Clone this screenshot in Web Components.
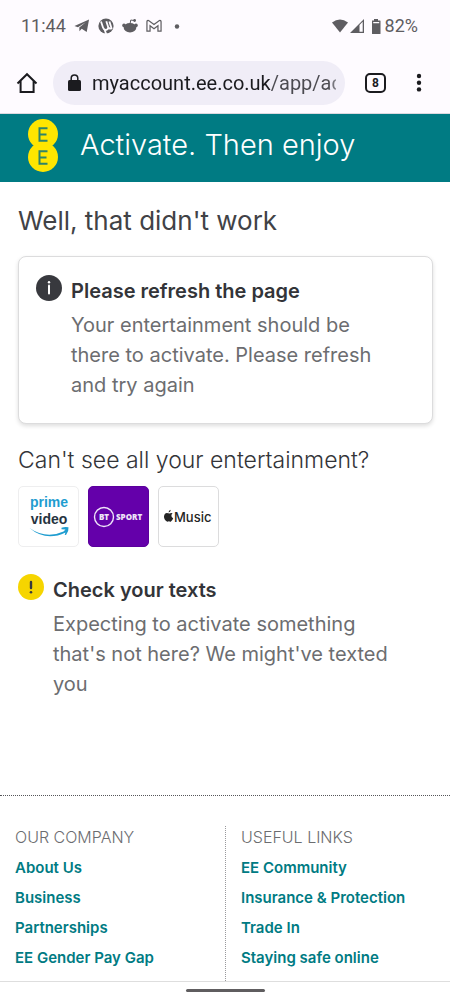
<!DOCTYPE html>
<html lang="en">
<head>
<meta charset="utf-8">
<meta name="viewport" content="width=device-width, initial-scale=1">
<title>Activate. Then enjoy</title>
<style>
  html, body { margin: 0; }
  body {
    background: #fff;
    color: #333438;
    font-family: Inter, "Liberation Sans", sans-serif;
    --teal: #007b83;
    --grey: #6c6d70;
  }
</style>
</head>
<body>
<ee-app></ee-app>

<script>
const define = (name, html) => {
  const template = document.createElement('template');
  template.innerHTML = html;
  customElements.define(name, class extends HTMLElement {
    constructor() {
      super();
      this.attachShadow({ mode: 'open' }).append(template.content.cloneNode(true));
    }
  });
};

define('status-bar', `
<style>
  :host { display: flex; align-items: center; height: 52px; padding: 0 32px 0 21px; box-sizing: border-box;
    background: #fefbff; color: #5e5d61; font: 18px/24px Roboto, sans-serif; }
  svg { display: block; fill: currentColor; }
  .icons { display: flex; align-items: center; gap: 8px; margin-left: 8px; flex: 1; }
  .signals { display: flex; align-items: center; gap: 2px; }
</style>
<span>11:44</span>
<span class="icons">
  <svg width="16" height="16" viewBox="0 0 17 16"><path d="M.5 8 16 1.2 13.5 14.5 8.2 11 5.8 13.5 5.600 9.500 12.500 4 4.200 9.300Z"/></svg>
  <svg width="16" height="16" viewBox="0 0 16 16"><circle cx="8" cy="8" r="7.600"/><path d="M3 3.500 5 9.500q1 3 3.500 2.300 2.300-.8 1.500-3.300L8.300 3.300M10 8.500q1 2.800 3.500 1.800L11.400 3.500M6.500 11.500 8.200 16" fill="none" stroke="#fefbff" stroke-width="1.800"/></svg>
  <svg width="16" height="16" viewBox="0 0 16 16"><ellipse cx="8" cy="9.700" rx="6.300" ry="4.800"/><circle cx="2" cy="7.400" r="1.800"/><circle cx="14" cy="7.400" r="1.800"/><circle cx="12.600" cy="2.500" r="1.400"/><path d="M8 6 8.800 2l3.500.6" fill="none" stroke="currentColor"/></svg>
  <svg width="16" height="14" viewBox="0 0 17 14"><path d="M1 12.500V2.300Q1.200.8 2.800 1.200L8.500 5.500l5.700-4.300q1.600-.4 1.800 1.100v10.200h-3.300V6.800L8.500 10 4.300 6.800v5.700Z" fill="none" stroke="currentColor" stroke-width="1.300"/></svg>
  <svg width="14" height="16" viewBox="0 0 14 16"><circle cx="7" cy="8.500" r="2.200"/></svg>
</span>
<span class="signals">
  <svg width="16" height="14" viewBox="0 0 16 14"><path d="M0 3.500Q8-2.500 16 3.500L8 13.500Z"/></svg>
  <svg width="14" height="14" viewBox="0 0 14 14"><path d="M0 14 14 0v14ZM9.500 6v6.800h3.200V2.800Z" fill-rule="evenodd"/></svg>
  <svg width="17" height="15" viewBox="0 0 17 15"><path d="M6 1.500h2V0h4v1.500H14q.5 0 .5.500v12.500q0 .5-.5.500H6.500q-.5 0-.5-.5ZM7.200 3v1.300h6V3Z" fill-rule="evenodd"/></svg>
  <span>82%</span>
</span>`);

define('browser-bar', `
<style>
  :host { display: flex; align-items: center; height: 62px; padding: 0 27px 0 16px; box-sizing: border-box;
    background: #fefbff; border-bottom: 1px solid #dcd9e0; color: #1b1b1f; font-family: Roboto, sans-serif; }
  button { display: block; margin: 0; padding: 0; border: 0; background: none; color: inherit; font: inherit; }
  svg { display: block; }
  .address { flex: 1; min-width: 0; display: flex; align-items: center; gap: 11px; height: 44px; margin: 0 20px 0 15px;
    padding: 0 9px 0 15px; border-radius: 22px; background: #f0edf7; box-sizing: border-box; }
  input { flex: 1; min-width: 0; height: 30px; padding: 0; border: 0; outline: 0; font: 20px/30px Roboto, sans-serif;
    background: linear-gradient(90deg, #1b1b1f 178px, #4b4a50 178px, #4b4a50 236px, #8b8a92) text; -webkit-text-fill-color: transparent; }
  .tabs { width: 21px; height: 20px; box-sizing: border-box; border: 2px solid; border-radius: 5px;
    font-size: 12px; font-weight: 700; line-height: 16px; text-align: center; }
  .menu { margin-left: 29px; }
</style>
<button aria-label="Home"><svg width="22" height="22" viewBox="0 0 22 22" fill="none" stroke="currentColor" stroke-width="2"><path d="M1.500 11.500 11 2.200l9.500 9.300M4.600 9v11h13V9"/></svg></button>
<label class="address">
  <svg width="13" height="17" viewBox="0 0 13 17"><rect x="0" y="6" width="13" height="11" rx="1.500" fill="currentColor"/><path d="M3.200 7V4.300a3.300 3.300 0 0 1 6.600 0V7" fill="none" stroke="currentColor" stroke-width="1.500"/></svg>
  <input type="text" aria-label="Address" value="myaccount.ee.co.uk/app/ac">
</label>
<button class="tabs" aria-label="Open tabs">8</button>
<button class="menu" aria-label="Menu"><svg width="8" height="20" viewBox="0 0 8 20" fill="currentColor"><circle cx="4" cy="3" r="2.200"/><circle cx="4" cy="9.700" r="2.200"/><circle cx="4" cy="16.400" r="2.200"/></svg></button>`);

define('page-banner', `
<style>
  :host { display: flex; align-items: center; gap: 22px; height: 68px; padding: 0 28px; box-sizing: border-box;
    background: var(--teal); color: #fff; }
  svg { display: block; margin-bottom: 5px; flex: none; }
  h1 { margin: 0 0 6px; font-size: 29px; line-height: 36px; font-weight: 300; }
</style>
<svg width="30" height="53" viewBox="0 0 30 53" role="img" aria-label="EE"><g fill="#ffe600"><circle cx="15" cy="15" r="15"/><circle cx="15" cy="38" r="15"/></g>
<g fill="none" stroke="#2f8468" stroke-width="2"><path d="M19.500 9.200h-8v12.600h8M11.500 15.500h7M19.500 32.200h-8v12.600h8M11.500 38.500h7"/></g></svg>
<h1><slot></slot></h1>`);

define('notice-item', `
<style>
  :host { display: flex; gap: 9px; align-items: flex-start; }
  .icon { flex: none; display: block; }
  .icon ::slotted(svg) { display: block; }
  h3 { margin: 0; padding-top: 1px; font-size: 20px; line-height: 30px; font-weight: 600; }
  p { margin: 4px 0 0; font-size: 20px; line-height: 30px; font-weight: 400; color: var(--grey); }
</style>
<span class="icon"><slot name="icon"></slot></span>
<div><h3><slot name="title"></slot></h3><p><slot></slot></p></div>`);

define('notice-card', `
<style>
  :host { display: block; padding: 18px 42px 23px 17px; border: 1px solid #dcdcdd; border-radius: 8px;
    background: #fff; box-shadow: 0 2px 4px #0002; }
</style>
<slot></slot>`);

define('brand-tile', `
<style>
  :host { display: flex; align-items: center; justify-content: center; width: 61px; height: 61px; box-sizing: border-box;
    border: 1px solid var(--edge, #dcdcdd); border-radius: 5px; background: var(--fill, #fff); }
</style>
<slot></slot>`);

define('link-column', `
<style>
  :host { display: block; padding: 0 15px; }
  h4 { margin: 0; font-size: 16px; line-height: 22px; font-weight: 300; color: var(--grey); }
  nav { display: flex; flex-direction: column; align-items: flex-start; margin-top: 5px; }
  ::slotted(a) { color: var(--teal); font-size: 15px; line-height: 30px; font-weight: 600; text-decoration: none; }
</style>
<h4><slot name="title"></slot></h4>
<nav><slot></slot></nav>`);

define('ee-app', `
<style>
  :host { display: flex; flex-direction: column; min-height: 100vh; }
  main { flex: 1; padding: 20px 17px 0 18px; }
  h2 { margin: 0; }
  .lead { font-size: 26px; line-height: 38px; font-weight: 400; color: #414246; }
  .sub { font-size: 23px; line-height: 32px; font-weight: 300; margin-top: 20px; }
  notice-card { margin-top: 16px; }
  .tiles { display: flex; gap: 9px; margin: 10px 0 27px; }
  .tiles svg { display: block; }
  .wide { padding-right: 34px; }
  .bt { --fill: #6400aa; --edge: #5b009c; }
  .prime { --edge: #eeeeef; }
  footer { display: grid; grid-template-columns: 1fr 1fr; padding-top: 30px; border-top: 1px dotted #55565a; margin-top: 20px; }
  footer link-column { padding-bottom: 8px; }
  footer link-column + link-column { border-left: 1px dotted #99999c; }
  .gesture { display: flex; justify-content: center; height: 17px; border-top: 1px solid #dedede; align-items: center; }
  .gesture i { width: 79px; height: 3px; border-radius: 2px; background: #5f5d5f; }
</style>
<status-bar></status-bar>
<browser-bar></browser-bar>
<page-banner>Activate. Then enjoy</page-banner>
<main>
  <h2 class="lead">Well, that didn't work</h2>
  <notice-card>
    <notice-item>
      <svg slot="icon" width="26" height="26" viewBox="0 0 26 26"><circle cx="13" cy="13" r="13" fill="#38393e"/><circle cx="13" cy="7.200" r="1.200" fill="#fff"/><path d="M13 10.500v8" stroke="#fff" stroke-width="2" stroke-linecap="round"/></svg>
      <span slot="title">Please refresh the page</span>
      Your entertainment should be there to activate. Please refresh and try again
    </notice-item>
  </notice-card>
  <h2 class="sub">Can't see all your entertainment?</h2>
  <div class="tiles">
    <brand-tile class="prime"><svg width="50" height="50" viewBox="0 0 50 50" role="img" aria-label="prime video">
      <g font-family="Liberation Sans, sans-serif" font-size="14" font-weight="700" text-anchor="middle"><text x="25" y="15" fill="#1f9dd0">prime</text><text x="25" y="32" fill="#26343f">video</text></g>
      <path d="M5.500 36Q22 47.500 39.500 39.500l2-2-4-.3v-1.500q3.500-1.200 7-.4.5 4-2.500 7.700l-1.300-.2.8-2.300Q22 50 5.500 36Z" fill="#1f9dd0"/></svg></brand-tile>
    <brand-tile class="bt"><svg width="55" height="30" viewBox="0 0 55 30" role="img" aria-label="BT Sport" fill="#eee3f8">
      <circle cx="13" cy="15" r="9.500" fill="none" stroke="#eee3f8" stroke-width="1.400"/>
      <g font-family="Open Sans, sans-serif" font-weight="800" font-size="8"><text x="13" y="18" text-anchor="middle">BT</text><text x="25" y="18">SPORT</text></g></svg></brand-tile>
    <brand-tile><svg width="51" height="24" viewBox="0 0 51 24" role="img" aria-label="Apple Music" fill="#242424">
      <path d="M6.500 8.500Q8 7.400 9.600 8.300q-1.400 1-1.200 2.700.1 1.600 1.800 2.300-.8 2.400-2.500 3.400-1 .1-1.800-.4-1 .5-2 .3Q.8 14.500 1 11.200 1.800 7.300 5.200 8.300ZM5.500 7.500Q5.500 5.200 7.800 4.700 7.900 6.800 5.500 7.500Z"/>
      <text x="11" y="16.500" font-family="Inter, sans-serif" font-size="13" font-weight="500">Music</text></svg></brand-tile>
  </div>
  <notice-item class="wide">
    <svg slot="icon" width="26" height="26" viewBox="0 0 26 26"><circle cx="13" cy="13" r="13" fill="#f6d500"/><path d="M13 8v6" stroke="#38393e" stroke-width="2.400" stroke-linecap="round"/><circle cx="13" cy="18.300" r="1.300" fill="#38393e"/></svg>
    <span slot="title">Check your texts</span>
    Expecting to activate something that's not here? We might've texted you
  </notice-item>
</main>
<footer>
  <link-column><span slot="title">OUR COMPANY</span><a href="#about">About Us</a><a href="#business">Business</a><a href="#partnerships">Partnerships</a><a href="#pay">EE Gender Pay Gap</a></link-column>
  <link-column><span slot="title">USEFUL LINKS</span><a href="#community">EE Community</a><a href="#insurance">Insurance &amp; Protection</a><a href="#trade">Trade In</a><a href="#safe">Staying safe online</a></link-column>
</footer>
<div class="gesture"><i></i></div>`);
</script>
</body>
</html>
